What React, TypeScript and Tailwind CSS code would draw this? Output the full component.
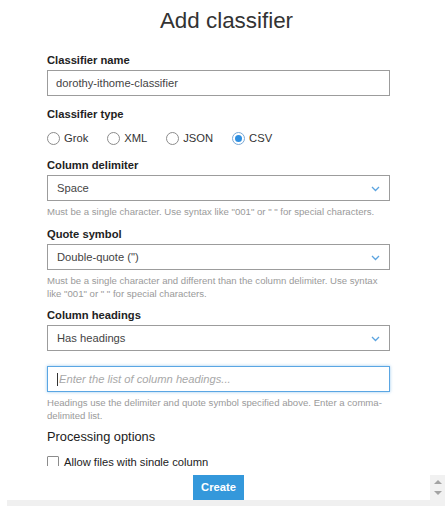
import React from 'react';

const font = { fontFamily: '"Liberation Sans", Arial, sans-serif' };

const Label: React.FC<{ text: string; className?: string }> = ({ text, className = '' }) => (
  <div className={`text-[11.2px] leading-[14px] font-bold text-[#222] ${className}`}>{text}</div>
);

const Hint: React.FC<{ children: React.ReactNode }> = ({ children }) => (
  <div className="mt-[4px] text-[9.6px] leading-[13px] text-[#9a9a9a] pr-[6px]">{children}</div>
);

const Chevron = () => (
  <svg width="9" height="6" viewBox="0 0 9 6" className="absolute right-[9px] top-[10px]">
    <path d="M1 1 L4.5 4.5 L8 1" fill="none" stroke="#5ba4e0" strokeWidth="1.3" />
  </svg>
);

const Select: React.FC<{ value: string }> = ({ value }) => (
  <div className="relative mt-[3px] h-[26px] border border-[#9c9c9c] bg-white flex items-center pl-[9px] text-[11.2px] text-[#444]">
    {value}
    <Chevron />
  </div>
);

const Radio: React.FC<{ label: string; checked?: boolean }> = ({ label, checked }) => (
  <div className="flex items-center gap-[4px]">
    {checked ? (
      <span className="w-[13px] h-[13px] rounded-full border border-[#7aa9d6] bg-white flex items-center justify-center">
        <span className="w-[7px] h-[7px] rounded-full bg-[#2f8fe0]" />
      </span>
    ) : (
      <span className="w-[13px] h-[13px] rounded-full border border-[#8c8c8c] bg-white" />
    )}
    <span className="text-[11.2px] leading-[14px] text-[#333]">{label}</span>
  </div>
);

export default function App() {
  return (
    <div style={font} className="w-[445px] h-[506px] bg-white relative overflow-hidden">
      <div className="h-[466px] overflow-hidden">
        <h1 className="pt-[8px] pl-[8px] text-center text-[22.4px] leading-[25px] font-normal text-[#333]">Add classifier</h1>
        <div className="ml-[47px] w-[343px]">
          <Label text="Classifier name" className="mt-[20px]" />
          <div className="mt-[3px] h-[26px] border border-[#9c9c9c] flex items-center pl-[8px] text-[11.2px] text-[#444]">
            dorothy-ithome-classifier
          </div>

          <Label text="Classifier type" className="mt-[11px]" />
          <div className="mt-[10px] flex items-center gap-[19px]">
            <Radio label="Grok" />
            <Radio label="XML" />
            <Radio label="JSON" />
            <Radio label="CSV" checked />
          </div>

          <Label text="Column delimiter" className="mt-[13px]" />
          <Select value="Space" />
          <Hint>Must be a single character. Use syntax like "001" or " " for special characters.</Hint>

          <Label text="Quote symbol" className="mt-[9px]" />
          <Select value={'Double-quote (")'} />
          <Hint>Must be a single character and different than the column delimiter. Use syntax like "001" or " " for special characters.</Hint>

          <Label text="Column headings" className="mt-[8px]" />
          <Select value="Has headings" />

          <div className="mt-[15px] h-[26px] border border-[#5aa6e3] shadow-[0_0_3px_rgba(90,166,227,0.6)] flex items-center pl-[9px] text-[11.2px] italic text-[#a8a8a8]">
            <span className="w-px h-[13px] bg-[#333] mr-[1px]" />
            Enter the list of column headings...
          </div>
          <Hint>Headings use the delimiter and quote symbol specified above. Enter a comma-delimited list.</Hint>

          <div className="mt-[7px] text-[12.8px] leading-[16px] text-[#1b1b1b]">Processing options</div>
          <div className="mt-[10px] flex items-center gap-[5px]">
            <span className="w-[12px] h-[12px] border border-[#8c8c8c] rounded-[1px] bg-white" />
            <span className="text-[11.2px] leading-[14px] text-[#222]">Allow files with single column</span>
          </div>
        </div>
      </div>

      <div className="h-[40px] flex flex-col">
        <div className="flex-1 flex items-end justify-center">
          <div className="ml-[-8px] w-[51px] h-[25px] bg-[#3498db] text-white text-[11.2px] font-bold flex items-center justify-center">
            Create
          </div>
        </div>
        <div className="flex h-[6px]">
          <div className="w-[7px] bg-white" />
          <div className="w-[423px] bg-[#f0f0f0]" />
        </div>
      </div>

      <div className="absolute left-[430px] top-[475px] w-[15px] h-[31px] bg-[#f1f1f1] flex flex-col items-center pt-[5px] gap-[7px]">
        <span className="w-0 h-0 border-l-[4px] border-r-[4px] border-b-[4px] border-l-transparent border-r-transparent border-b-[#a3a3a3]" />
        <span className="w-0 h-0 border-l-[4px] border-r-[4px] border-t-[4px] border-l-transparent border-r-transparent border-t-[#a3a3a3]" />
      </div>
    </div>
  );
}
